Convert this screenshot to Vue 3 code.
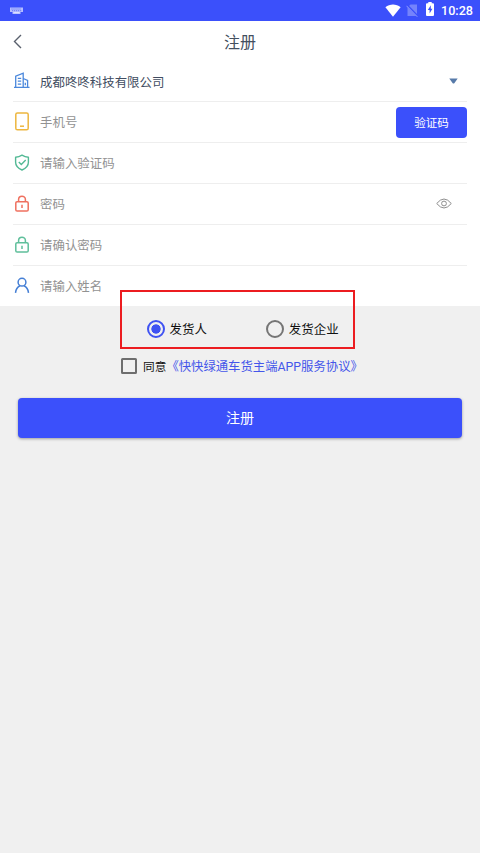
<script setup>
import { ref } from 'vue'

const fields = [
  { icon: 'phone', hint: '手机号', type: 'code' },
  { icon: 'shield', hint: '请输入验证码' },
  { icon: 'lock', tone: 'red', hint: '密码', type: 'eye' },
  { icon: 'lock', tone: 'green', hint: '请确认密码' },
  { icon: 'user', hint: '请输入姓名' },
]
const roles = ['发货人', '发货企业']
const role = ref('发货人')
const agreed = ref(false)
</script>

<template>
  <div class="screen">
    <div class="status">
      <svg class="keyboard" width="13" height="8" viewBox="0 0 13 8">
        <path d="M0 0.5h13v4.5h-2.5v2h-8V5H0z" fill="#b4bdff" />
        <path d="M1.5 2h10M2.2 3.7h9" stroke="#4457f5" stroke-width=".8" stroke-dasharray="1 1" />
        <path d="M3.5 5.7h6" stroke="#e5e8ff" />
      </svg>
      <div class="status-right">
        <svg class="wifi" width="16" height="13" viewBox="0 0 16 13">
          <path d="M.4 3.2C4.8-.3 11.2-.3 15.6 3.2L8 12.7z" fill="#fff" />
        </svg>
        <svg class="sim" width="13" height="13" viewBox="0 0 13 13">
          <path d="M4.5 .5H11V12H1.5V3.5z" fill="#7583fb" />
          <path d="M.8 1l11.2 11.5" stroke="#3b50fb" stroke-width="2" />
          <path d="M.5 1.8l10.8 11" stroke="#8f9afc" stroke-width="1" />
        </svg>
        <svg class="battery" width="8" height="14" viewBox="0 0 8 14">
          <path d="M2.3 0h3.4v1.3H7q1 0 1 1V13q0 1-1 1H1q-1 0-1-1V2.3q0-1 1-1h1.3z" fill="#fff" />
          <path d="M4.8 3.2L1.8 8h1.8v3.5L6.4 6.8H4.8z" fill="#3b50fb" />
        </svg>
        <span class="clock">10:28</span>
      </div>
    </div>

    <header class="header">
      <svg class="back" width="9" height="15" viewBox="0 0 9 15" fill="none">
        <path d="M8 1L1.5 7.5 8 14" stroke="#59606d" stroke-width="1.4" />
      </svg>
      <h1>注册</h1>
      <span class="back"></span>
    </header>

    <main class="form">
      <div class="row">
        <svg class="icon" width="16" height="17" viewBox="0 0 16 17" fill="none" stroke="#4b88dc" stroke-width="1.3">
          <path d="M1.7 15.3V4.2L9.2 1.2v14.1M9.2 6.5l4.4 2v6.8M0 15.4h15.5" />
          <path d="M3.8 6.3h3.4M3.8 9.2h3.4M3.8 12.1h3.4M11.3 10.8v2.4" />
        </svg>
        <span class="company">成都咚咚科技有限公司</span>
        <svg class="caret" width="9" height="6" viewBox="0 0 9 6">
          <path d="M.3 .4h8.4L5.3 5.2q-.8.7-1.6 0z" fill="#577aa9" />
        </svg>
      </div>
      <div v-for="field in fields" :key="field.hint" class="row">
        <svg v-if="field.icon === 'phone'" class="icon" width="16" height="19" viewBox="0 0 16 19" fill="none" stroke="#edb63f" stroke-width="1.5">
          <rect x="1.8" y="1" width="12.4" height="16.8" rx="1.6" />
          <path d="M6 14.2h4" />
        </svg>
        <svg v-else-if="field.icon === 'shield'" class="icon" width="16" height="17" viewBox="0 0 16 17" fill="none" stroke="#53b995" stroke-width="1.4">
          <path d="M8 1.2Q11 3.2 14.4 3.3V8.2C14.4 12 11.7 14.4 8 16 4.3 14.4 1.6 12 1.6 8.2V3.3Q5 3.2 8 1.2z" stroke-linejoin="round" />
          <path d="M4.8 8l2.5 2.4L11.7 6" />
        </svg>
        <svg v-else-if="field.icon === 'lock'" class="icon" :class="field.tone" width="16" height="17" viewBox="0 0 16 17" fill="none" stroke="currentColor" stroke-width="1.5">
          <rect x="1.8" y="6.8" width="12.4" height="9.2" rx="1.3" />
          <path d="M4.6 6.8V4.5C4.6 0 11.4 0 11.4 4.5V6.8M8 9.7v3.3" />
        </svg>
        <svg v-else class="icon" width="16" height="17" viewBox="0 0 16 17" fill="none" stroke="#457fd5" stroke-width="1.5">
          <circle cx="8" cy="5.2" r="3.9" />
          <path d="M1.5 15.8C1.9 12 4 9.7 6 8.8M14.5 15.8C14.1 12 12 9.7 10 8.8" />
        </svg>
        <span class="hint">{{ field.hint }}</span>
        <button v-if="field.type === 'code'" class="code">验证码</button>
        <svg v-if="field.type === 'eye'" class="eye" width="16" height="11" viewBox="0 0 16 11" fill="none" stroke="#8e8e8e" stroke-width="1">
          <path d="M.7 5.5Q8-3.5 15.3 5.5Q8 14.5.7 5.5z" />
          <circle cx="8" cy="5.5" r="2.4" />
        </svg>
      </div>
    </main>

    <div class="roles">
      <div v-for="name in roles" :key="name" class="role" @click="role = name">
        <span class="radio" :class="{ on: role === name }"></span>
        <span>{{ name }}</span>
      </div>
      <div class="frame"></div>
    </div>

    <div class="agree">
      <span class="check" @click="agreed = !agreed"></span>
      <span class="agree-text">同意</span><a>《快快绿通车货主端APP服务协议》</a>
    </div>

    <button class="submit">注册</button>
  </div>
</template>

<style>
body {
  background: #f0f0f0;
}
</style>

<style scoped>
.screen {
  min-height: 853px;
  background: #f0f0f0;
  font-family: Roboto, "Noto Sans CJK SC", sans-serif;
  font-size: 12.45px;
  color: #111;
}
.status {
  height: 21px;
  background: #3b50fb;
  display: flex;
  align-items: center;
  justify-content: space-between;
  padding: 0 7px 0 10px;
}
.status-right {
  display: flex;
  align-items: center;
}
.wifi {
  margin-right: 5px;
}
.sim {
  margin-right: 7px;
}
.battery {
  margin-right: 7px;
  margin-bottom: 3px;
}
.clock {
  color: #fff;
  font-size: 12.6px;
  font-weight: 500;
  line-height: 20px;
}
.header {
  box-sizing: border-box;
  height: 40px;
  background: #fff;
  display: flex;
  align-items: center;
  justify-content: space-between;
  padding: 0 13px;
}
.back {
  width: 9px;
}
h1 {
  margin: 0;
  padding-bottom: 1px;
  font-size: 16px;
  font-weight: 400;
  color: #44505f;
}
.form {
  background: #fff;
  padding: 0 13px;
}
.row {
  box-sizing: border-box;
  height: 41px;
  border-bottom: 1px solid #eee;
  display: flex;
  align-items: center;
}
.row:last-child {
  height: 40px;
  border-bottom: 0;
}
.icon {
  margin: 0 10px 1px 1px;
}
.red {
  color: #ef705f;
}
.green {
  color: #5fbf9b;
}
.company,
.hint {
  flex: 1;
}
.company {
  padding-top: 2px;
  color: #414d61;
}
.hint {
  color: #929292;
}
.caret {
  margin-right: 9px;
}
.eye {
  margin: 0 15px 1px 0;
}
button {
  border: 0;
  background: #3b50fb;
  color: #fff;
  font-family: inherit;
  padding: 0;
}
.code {
  width: 71px;
  height: 31px;
  border-radius: 4px;
  font-size: 11.5px;
  padding-bottom: 1px;
}
.roles {
  position: relative;
  box-sizing: border-box;
  height: 47px;
  display: flex;
  align-items: center;
  padding: 0 0 2px 146.5px;
  gap: 59px;
}
.role {
  display: flex;
  align-items: center;
  gap: 5px;
}
.radio {
  box-sizing: border-box;
  width: 18px;
  height: 18px;
  border: 2px solid #757575;
  border-radius: 50%;
}
.radio.on {
  border-color: #3f52f2;
  background: radial-gradient(circle, #3f52f2 4.3px, transparent 5px);
}
.frame {
  position: absolute;
  box-sizing: border-box;
  left: 120px;
  top: -16px;
  width: 235px;
  height: 59px;
  border: 2px solid #ec1c20;
  pointer-events: none;
}
.agree {
  box-sizing: border-box;
  height: 28px;
  display: flex;
  align-items: center;
  padding: 0 0 2px 121px;
}
.check {
  box-sizing: border-box;
  width: 16px;
  height: 16px;
  border: 2px solid #6e6e6e;
  border-radius: 1.5px;
  margin-right: 6px;
}
.agree-text {
  font-size: 11.7px;
  padding-bottom: 1px;
}
.agree a {
  font-size: 12.35px;
  color: #4456ea;
}
.submit {
  display: block;
  width: 444px;
  height: 40px;
  margin: 17px 0 0 18px;
  padding-bottom: 2px;
  border-radius: 4px;
  font-size: 14px;
  box-shadow: 0 1px 3px rgba(0, 0, 0, .35);
}
</style>
